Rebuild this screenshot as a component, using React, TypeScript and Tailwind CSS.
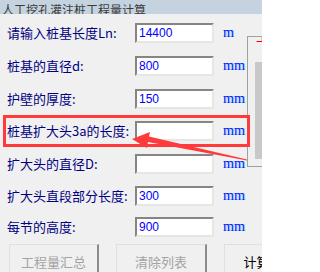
import React from "react";

const rows: { label: string; value: string; unit: string; mt: string }[] = [
  { label: "请输入桩基长度Ln:", value: "14400", unit: "m", mt: "mt-[9px]" },
  { label: "桩基的直径d:", value: "800", unit: "mm", mt: "mt-[13px]" },
  { label: "护壁的厚度:", value: "150", unit: "mm", mt: "mt-[13px]" },
  { label: "桩基扩大头3a的长度:", value: "", unit: "mm", mt: "mt-[12px]" },
  { label: "扩大头的直径D:", value: "", unit: "mm", mt: "mt-[13px]" },
  { label: "扩大头直段部分长度:", value: "300", unit: "mm", mt: "mt-[12px]" },
  { label: "每节的高度:", value: "900", unit: "mm", mt: "mt-[11px]" },
];

const cjk = "font-['Noto_Sans_CJK_SC','Noto_Sans',sans-serif]";

export default function App() {
  return (
    <div className={`relative w-[262px] h-[272px] overflow-hidden bg-[#f0f0f0] ${cjk}`}>
      {/* title bar */}
      <div className="h-[14px] overflow-hidden bg-[#c5d3e0]">
        <div className="pl-[2px] pt-[4px] text-[12px] leading-[12px] text-[#3a3a3a] whitespace-nowrap">
          人工挖孔灌注桩工程量计算
        </div>
      </div>

      <div className="flex">
        {/* form */}
        <div className="flex flex-col w-[247px] shrink-0 pl-[7px]">
          {rows.map((r, i) => (
            <div key={i} className={`flex items-center h-[20px] ${r.mt}`}>
              <div className="w-[128px] shrink-0 whitespace-nowrap text-[13px] leading-[14px] text-[#000080]">
                {r.label}
              </div>
              <div className="w-[79px] h-[20px] shrink-0 bg-white border-2 border-t-[#858585] border-l-[#858585] border-r-[#e6e6e6] border-b-[#e6e6e6] flex items-center pl-[2px]">
                <span className="font-['Liberation_Sans',sans-serif] text-[12px] leading-[12px] text-[#0000ff]">
                  {r.value}
                </span>
              </div>
              <div className="ml-[9px] font-['Liberation_Serif',serif] text-[14px] leading-[14px] text-[#1010ff] [text-shadow:1px_0_0_rgba(0,210,255,0.55)]">
                {r.unit}
              </div>
            </div>
          ))}
        </div>

        {/* group box (cut off on the right) */}
        <div className="relative mt-[22px] w-[15px] h-[131px] shrink-0 border-l border-t border-b border-[#a0a0a0] overflow-hidden">
          <span className="absolute left-[7px] top-[-8px] bg-[#f0f0f0] pl-[1px] text-[13px] leading-[14px] text-[#ff0000] whitespace-nowrap">
            工
          </span>
          <div className="ml-[7px] mt-[25px] w-[7px] h-[97px] bg-[#c8c8c8]" />
        </div>
      </div>

      {/* buttons */}
      <div className="flex mt-[7px] pl-[9px] gap-[17px] whitespace-nowrap">
        <div className="w-[90px] h-[34px] shrink-0 flex items-center justify-center border-t border-l border-t-[#e0e0e0] border-l-[#e0e0e0] border-r-2 border-r-[#8a8a8a] text-[13px] text-[#a3a3a3]">
          工程量汇总
        </div>
        <div className="w-[91px] h-[34px] shrink-0 flex items-center justify-center border-t border-l border-t-[#e0e0e0] border-l-[#e0e0e0] border-r-2 border-r-[#8a8a8a] text-[13px] text-[#a3a3a3]">
          清除列表
        </div>
        <div className="w-[66px] h-[34px] shrink-0 flex items-center justify-center border-t border-l border-t-[#e0e0e0] border-l-[#e0e0e0] border-r-2 border-r-[#8a8a8a] text-[13px] text-black">
          计算
        </div>
      </div>

      {/* red annotation box */}
      <div className="absolute left-[3px] top-[115px] w-[247px] h-[32px] border-[3px] border-[#ff3a3a]" />

      {/* red annotation arrow */}
      <svg className="absolute left-0 top-0" width="262" height="272" viewBox="0 0 262 272">
        <polygon
          points="132,139 150,132 149,136.5 247,159.5 247,160.5 148,142 147,148"
          fill="#ff3a3a"
        />
      </svg>
    </div>
  );
}
